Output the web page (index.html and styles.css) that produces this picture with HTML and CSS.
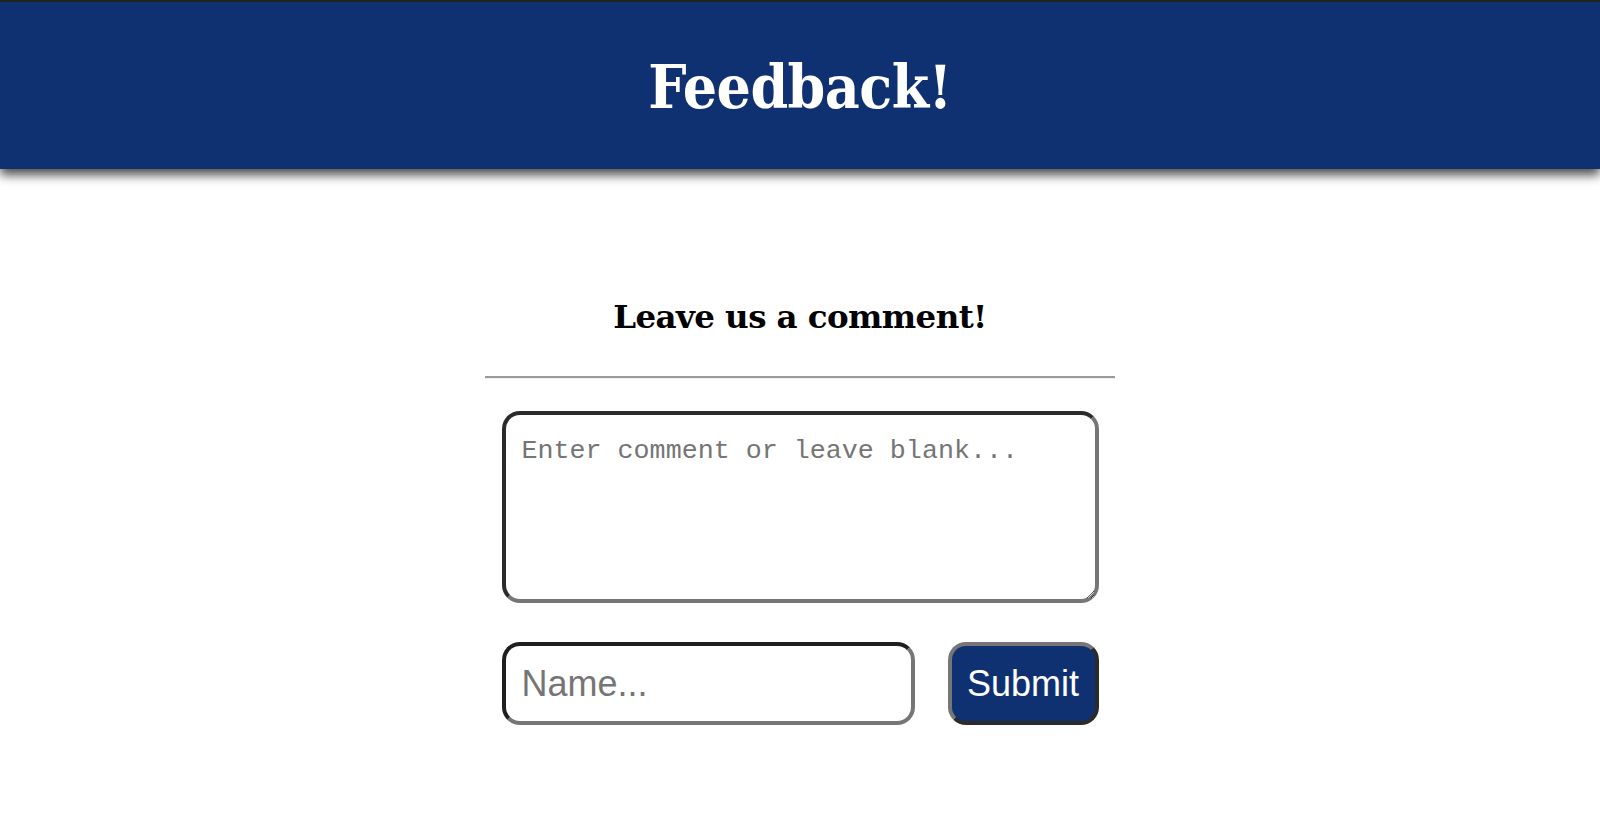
FILE: index.html
```html
<!DOCTYPE html>
<html lang="en">
<head>
<meta charset="utf-8">
<title>Feedback!</title>
<link rel="stylesheet" href="styles.css">
</head>
<body>
<header class="site-header">
  <h1 class="site-title">Feedback!</h1>
</header>
<main class="content">
  <section class="feedback">
    <h2 class="feedback-title">Leave us a comment!</h2>
    <hr class="divider">
    <form class="feedback-form">
      <textarea class="comment-box" placeholder="Enter comment or leave blank..."></textarea>
      <div class="form-row">
        <input class="name-input" type="text" placeholder="Name...">
        <button class="submit-btn" type="button">Submit</button>
      </div>
    </form>
  </section>
</main>
</body>
</html>
```

FILE: styles.css
```css
html, body {
  margin: 0;
  padding: 0;
  background: #ffffff;
}

body {
  font-family: "Liberation Sans", Arial, sans-serif;
}

.site-header {
  height: 167px;
  border-top: 2px solid #222222;
  background: #0f3172;
  display: flex;
  align-items: center;
  justify-content: center;
  box-shadow: 0 6px 10px rgba(0, 0, 0, 0.7);
}

.site-title {
  margin: 0;
  padding-top: 3px;
  color: #ffffff;
  font-family: "DejaVu Serif Condensed", "DejaVu Serif", serif;
  font-weight: bold;
  font-size: 60px;
  line-height: 1;
  letter-spacing: -0.5px;
}

.content {
  padding-top: 128px;
}

.feedback {
  width: 630px;
  margin: 0 auto;
}

.feedback-title {
  margin: 0;
  text-align: center;
  font-family: "DejaVu Serif", serif;
  font-weight: bold;
  font-size: 32.5px;
  line-height: 40px;
  color: #000000;
  letter-spacing: -0.6px;
}

.divider {
  margin: 39px 0 0;
  border: 0;
  border-top: 2px solid #999999;
  border-bottom: 1px solid #eeeeee;
  height: 0;
}

.feedback-form {
  display: flex;
  flex-direction: column;
  align-items: center;
  gap: 39px;
  margin-top: 32px;
}

.comment-box {
  box-sizing: border-box;
  width: 597px;
  height: 192px;
  padding: 21px 16px 14px;
  border: 4px solid;
  border-color: #2b2b2b #767676 #767676 #2b2b2b;
  border-radius: 18px;
  font-family: "Liberation Mono", "Courier New", monospace;
  font-size: 26.7px;
  color: #333333;
  outline: none;
}

.comment-box::placeholder {
  color: #757575;
}

.form-row {
  display: flex;
  gap: 33px;
  width: 597px;
}

.name-input {
  box-sizing: border-box;
  width: 413px;
  height: 83px;
  padding: 0 16px;
  border: 4px solid;
  border-color: #1f1f1f #767676 #767676 #1f1f1f;
  border-radius: 18px;
  font-family: "Liberation Sans", Arial, sans-serif;
  font-size: 36px;
  outline: none;
}

.name-input::placeholder {
  color: #757575;
}

.submit-btn {
  box-sizing: border-box;
  width: 151px;
  height: 83px;
  padding: 0;
  border: 4px solid;
  border-color: #767676 #2b2b2b #2b2b2b #767676;
  border-radius: 18px;
  background: #0f3172;
  color: #ffffff;
  font-family: "Liberation Sans", Arial, sans-serif;
  font-size: 36px;
  cursor: pointer;
}
```
